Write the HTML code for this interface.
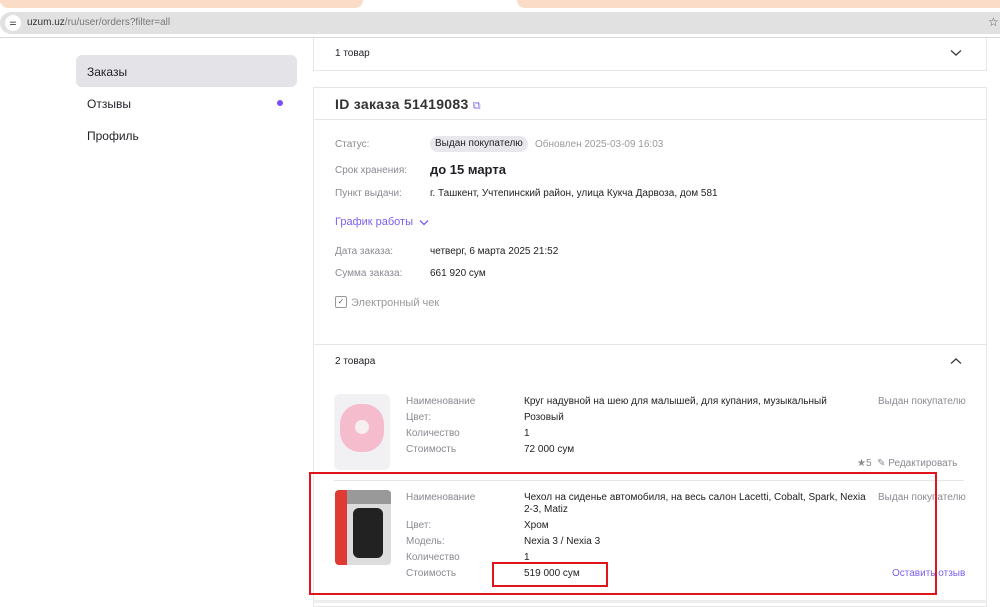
<!DOCTYPE html>
<html><head><meta charset="utf-8"><style>
*{margin:0;padding:0;box-sizing:border-box}
body{width:1000px;height:603px;overflow:hidden;background:#fff;font-family:"Liberation Sans",sans-serif;position:relative;color:#1f1f26}
.a{position:absolute;white-space:nowrap}
.l{color:#8a8a92;font-size:10px}
.v{font-size:10px;color:#222}
</style></head><body>
<div class="a" style="left:0;top:0;width:363px;height:8px;background:#fbdcc6;border-radius:0 0 10px 10px"></div>
<div class="a" style="left:517px;top:0;width:483px;height:8px;background:#fbdcc6;border-radius:0 0 0 10px"></div>
<div class="a" style="left:0;top:12px;width:1000px;height:22px;background:#e1e1e1;border-radius:11px 0 0 11px"></div>
<div class="a" style="left:5px;top:15px;width:16px;height:16px;border-radius:8px;background:#fff;font-size:8px;text-align:center;line-height:16px">⚌</div>
<div class="a" style="left:27px;top:17px;font-size:10px;color:#333">uzum.uz<span style="color:#777">/ru/user/orders?filter=all</span></div>
<div class="a" style="left:988px;top:15px;font-size:12px;color:#555">☆</div>
<div class="a" style="left:0;top:37px;width:1000px;height:1px;background:#d8d8d8"></div>

<div class="a" style="left:76px;top:55px;width:221px;height:32px;background:#e4e4e8;border-radius:6px"></div>
<div class="a" style="left:87px;top:65px;font-size:12px">Заказы</div>
<div class="a" style="left:87px;top:97px;font-size:12px">Отзывы</div>
<div class="a" style="left:277px;top:100px;width:6px;height:6px;border-radius:3px;background:#7b4ef0"></div>
<div class="a" style="left:87px;top:129px;font-size:12px">Профиль</div>

<div class="a" style="left:313px;top:36px;width:674px;height:35px;border:1px solid #e6e6e9;border-top:none"></div>
<div class="a" style="left:335px;top:48px;font-size:10px">1 товар</div>
<svg class="a" style="left:950px;top:49px" width="12" height="8" viewBox="0 0 12 8"><path d="M1 1.5 L6 6 L11 1.5" fill="none" stroke="#444" stroke-width="1.4"/></svg>

<div class="a" style="left:313px;top:87px;width:674px;height:520px;border:1px solid #e6e6e9"></div>
<div class="a" style="left:335px;top:96px;font-size:14px;font-weight:bold;color:#333;letter-spacing:.3px">ID заказа 51419083 <span style="color:#8b6cf0;font-size:11px;font-weight:normal">⧉</span></div>
<div class="a" style="left:314px;top:119px;width:672px;height:1px;background:#e6e6e9"></div>

<div class="a l" style="left:335px;top:139px">Статус:</div>
<div class="a" style="left:430px;top:136px;height:16px;padding:0 5px;background:#e8e8ec;border-radius:8px;font-size:10px;line-height:16px">Выдан покупателю</div>
<div class="a l" style="left:535px;top:139px;color:#9a9aa0">Обновлен 2025-03-09 16:03</div>
<div class="a l" style="left:335px;top:165px">Срок хранения:</div>
<div class="a" style="left:430px;top:162px;font-size:13px;font-weight:bold">до 15 марта</div>
<div class="a l" style="left:335px;top:188px">Пункт выдачи:</div>
<div class="a v" style="left:430px;top:188px">г. Ташкент, Учтепинский район, улица Кукча Дарвоза, дом 581</div>
<div class="a" style="left:335px;top:216px;font-size:11px;color:#7b5ff0">График работы</div>
<svg class="a" style="left:419px;top:219px" width="10" height="7" viewBox="0 0 10 7"><path d="M1 1.5 L5 5.5 L9 1.5" fill="none" stroke="#7b5ff0" stroke-width="1.3"/></svg>
<div class="a l" style="left:335px;top:246px">Дата заказа:</div>
<div class="a v" style="left:430px;top:246px">четверг, 6 марта 2025 21:52</div>
<div class="a l" style="left:335px;top:268px">Сумма заказа:</div>
<div class="a v" style="left:430px;top:268px">661 920 сум</div>
<div class="a" style="left:335px;top:296px;width:12px;height:12px;border:1px solid #999;border-radius:2px;font-size:8px;line-height:10px;text-align:center;color:#666">✓</div>
<div class="a" style="left:351px;top:297px;font-size:11px;color:#999">Электронный чек</div>
<div class="a" style="left:314px;top:344px;width:672px;height:1px;background:#e6e6e9"></div>
<div class="a" style="left:335px;top:356px;font-size:10px">2 товара</div>
<svg class="a" style="left:950px;top:357px" width="12" height="8" viewBox="0 0 12 8"><path d="M1 6.5 L6 2 L11 6.5" fill="none" stroke="#444" stroke-width="1.4"/></svg>

<div class="a" style="left:334px;top:394px;width:56px;height:76px;background:#f1f1f3;border-radius:6px"></div>
<div class="a" style="left:340px;top:404px;width:44px;height:48px;background:#f4bccd;border-radius:20px"></div>
<div class="a" style="left:355px;top:420px;width:14px;height:14px;background:#f7eef0;border-radius:7px"></div>
<div class="a l" style="left:406px;top:396px">Наименование</div>
<div class="a v" style="left:524px;top:396px">Круг надувной на шею для малышей, для купания, музыкальный</div>
<div class="a l" style="left:878px;top:396px">Выдан покупателю</div>
<div class="a l" style="left:406px;top:412px">Цвет:</div><div class="a v" style="left:524px;top:412px">Розовый</div>
<div class="a l" style="left:406px;top:428px">Количество</div><div class="a v" style="left:524px;top:428px">1</div>
<div class="a l" style="left:406px;top:444px">Стоимость</div><div class="a v" style="left:524px;top:444px">72 000 сум</div>
<div class="a l" style="left:857px;top:458px">★5 &nbsp;✎ Редактировать</div>
<div class="a" style="left:334px;top:480px;width:630px;height:1px;background:#e6e6e9"></div>

<div class="a" style="left:335px;top:490px;width:56px;height:75px;background:#ddd;border-radius:4px;overflow:hidden">
<div style="position:absolute;left:0;top:0;width:12px;height:75px;background:#e03b32"></div>
<div style="position:absolute;left:12px;top:0;width:44px;height:14px;background:#999"></div>
<div style="position:absolute;left:18px;top:18px;width:30px;height:50px;background:#222;border-radius:6px"></div>
</div>
<div class="a l" style="left:406px;top:492px">Наименование</div>
<div class="a v" style="left:524px;top:492px;white-space:normal;width:345px;line-height:12px">Чехол на сиденье автомобиля, на весь салон Lacetti, Cobalt, Spark, Nexia 2-3, Matiz</div>
<div class="a l" style="left:878px;top:492px">Выдан покупателю</div>
<div class="a l" style="left:406px;top:520px">Цвет:</div><div class="a v" style="left:524px;top:520px">Хром</div>
<div class="a l" style="left:406px;top:536px">Модель:</div><div class="a v" style="left:524px;top:536px">Nexia 3 / Nexia 3</div>
<div class="a l" style="left:406px;top:552px">Количество</div><div class="a v" style="left:524px;top:552px">1</div>
<div class="a l" style="left:406px;top:568px">Стоимость</div><div class="a v" style="left:524px;top:568px">519 000 сум</div>
<div class="a" style="left:892px;top:568px;font-size:10px;color:#7b5ff0">Оставить отзыв</div>

<div class="a" style="left:309px;top:472px;width:628px;height:123px;border:2px solid #e0141c"></div>
<div class="a" style="left:492px;top:562px;width:116px;height:25px;border:2px solid #e0141c"></div>
<div class="a" style="left:313px;top:600px;width:674px;height:3px;background:#eee"></div>
</body></html>
